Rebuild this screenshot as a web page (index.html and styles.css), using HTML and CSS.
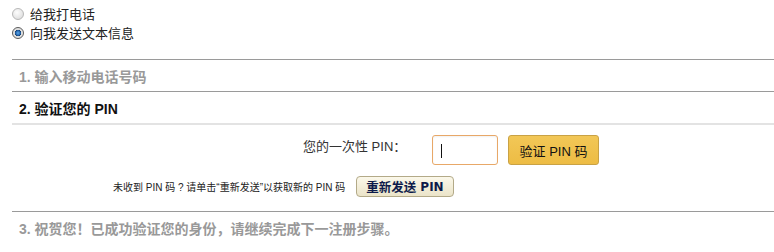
FILE: index.html
```html
<!DOCTYPE html>
<html lang="zh-CN">
<head>
<meta charset="utf-8">
<link rel="stylesheet" href="styles.css">
</head>
<body>
<div class="page">
  <div class="options">
    <label class="opt"><span class="radio"></span><span>给我打电话</span></label>
    <label class="opt"><span class="radio checked"></span><span>向我发送文本信息</span></label>
  </div>
  <div class="step done">1. 输入移动电话号码</div>
  <div class="step active">2. 验证您的 PIN</div>
  <div class="content">
    <div class="pin-row">
      <span class="pin-label">您的一次性 PIN：</span>
      <span class="pin-input"><span class="caret"></span></span>
      <span class="btn-verify">验证 PIN 码</span>
    </div>
    <div class="resend-row">
      <span class="resend-text">未收到 PIN 码 ? 请单击“重新发送”以获取新的 PIN 码</span>
      <span class="btn-resend">重新发送 <b class="pin">PIN</b></span>
    </div>
  </div>
  <div class="step pending">3. 祝贺您！已成功验证您的身份，请继续完成下一注册步骤。</div>
</div>
</body>
</html>
```

FILE: styles.css
```css
html, body {
  margin: 0;
  padding: 0;
  background: #fff;
}
body {
  font-family: "Liberation Sans", "Noto Sans CJK SC", sans-serif;
  color: #333;
}
.page {
  padding-left: 12px;
  width: 762px;
}
.options {
  padding-top: 4px;
  height: 55px;
  display: flex;
  flex-direction: column;
}
.opt {
  display: flex;
  align-items: center;
  height: 19px;
  font-size: 13px;
  color: #222;
}
.radio {
  width: 10px;
  height: 10px;
  border-radius: 50%;
  border: 1px solid #b8b8b8;
  background: radial-gradient(circle at 40% 35%, #fdfdfd 0%, #e2e2e2 70%, #d0d0d0 100%);
  margin-right: 6px;
  box-sizing: content-box;
}
.radio.checked {
  border-color: #5a5a5a;
  background: radial-gradient(circle at 50% 50%, #5fa8e8 0%, #1d5fa8 35%, #1a3f6a 42%, #dcdcdc 50%, #f4f4f4 100%);
}
.step {
  height: 31px;
  border-top: 1px solid #9a9a9a;
  display: flex;
  align-items: center;
  padding-left: 7px;
  font-size: 14px;
  font-weight: bold;
}
.step.done, .step.pending {
  color: #999;
}
.step.active {
  color: #111;
  border-bottom: 2px solid #e3e3e3;
  height: 31px;
}
.content {
  height: 86px;
  display: flex;
  flex-direction: column;
}
.pin-row {
  display: flex;
  align-items: center;
  margin-top: 10px;
  height: 30px;
  padding-left: 291px;
}
.pin-label {
  font-size: 13px;
  color: #333;
  width: 129px;
  margin-top: -10px;
}
.pin-input {
  width: 64px;
  height: 28px;
  border: 1px solid #e8a868;
  border-radius: 3px;
  position: relative;
  box-shadow: inset 0 1px 2px rgba(0,0,0,0.06);
}
.caret {
  position: absolute;
  left: 8px;
  top: 8px;
  width: 1px;
  height: 14px;
  background: #111;
}
.btn-verify {
  margin-left: 10px;
  width: 89px;
  height: 28px;
  border: 1px solid #c9a245;
  border-radius: 3px;
  background: linear-gradient(#f2c757, #edbc44);
  font-size: 13px;
  color: #111;
  display: flex;
  align-items: center;
  justify-content: center;
}
.resend-row {
  display: flex;
  align-items: center;
  margin-top: 11px;
  padding-left: 101px;
  height: 21px;
}
.resend-text {
  font-size: 10px;
  color: #222;
  width: 243px;
  white-space: nowrap;
}
.btn-resend {
  width: 96px;
  height: 19px;
  border: 1px solid #b3aa88;
  border-radius: 4px;
  background: linear-gradient(#fbf8ea, #ebe4c9);
  display: flex;
  align-items: center;
  justify-content: center;
  font-size: 12.5px;
  font-weight: bold;
  color: #0d1a4a;
}
.btn-resend .pin {
  font-family: "DejaVu Sans", sans-serif;
  margin-left: 4px;
  font-size: 12px;
}
```
